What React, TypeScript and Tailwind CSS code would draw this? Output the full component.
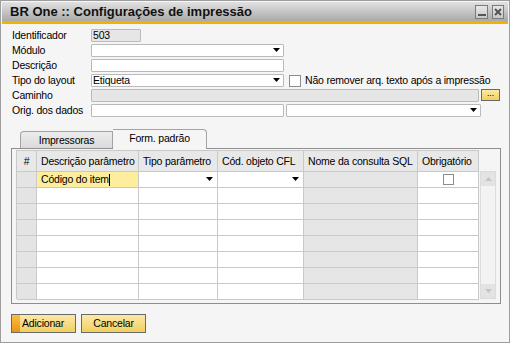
import React from "react";

const Arrow = ({ cls }: { cls: string }) => (
  <svg className={cls} width="7" height="4" viewBox="0 0 7 4">
    <path d="M0 0H7L3.5 4Z" fill="#000" />
  </svg>
);

const Field = ({
  w,
  bg = "bg-white",
  arrow = false,
  children,
}: {
  w: string;
  bg?: string;
  arrow?: boolean;
  children?: React.ReactNode;
}) => (
  <div
    className={`relative h-[13px] border border-[#bababa] rounded-[1px] flex items-center pl-[1px] leading-[11px] ${w} ${bg}`}
  >
    {children}
    {arrow && <Arrow cls="absolute right-[3px] top-[3px]" />}
  </div>
);

const Label = ({ children }: { children: React.ReactNode }) => (
  <div className="w-[80px] pl-[1px] leading-[13px] h-[13px] whitespace-nowrap">{children}</div>
);

const cols = [
  { w: "w-[20px]", label: "#", center: true },
  { w: "w-[102px]", label: "Descrição parâmetro" },
  { w: "w-[79px]", label: "Tipo parâmetro" },
  { w: "w-[86px]", label: "Cód. objeto CFL" },
  { w: "w-[114px]", label: "Nome da consulta SQL" },
  { w: "w-[61px]", label: "Obrigatório" },
];

export default function App() {
  const rows = [0, 1, 2, 3, 4, 5, 6, 7];
  return (
    <div className="w-[510px] h-[343px] border border-[#9d9d9d] bg-[#f5f5f5] p-[1px] flex flex-col font-['Liberation_Sans',Arial,sans-serif] text-[10.5px] tracking-[-0.2px] text-black overflow-hidden">
      {/* Title bar */}
      <div className="h-[19px] bg-gradient-to-b from-[#e2e2e2] to-[#a9a9a9] flex items-center justify-between pl-[8px] pr-[4px]">
        <span className="font-bold text-[13px] tracking-normal leading-[14px] text-[#111] mt-[1px]">
          BR One :: Configurações de impressão
        </span>
        <div className="flex gap-[4px] mt-[1px]">
          <div className="w-[13px] h-[14px] border border-[#7a7a7a] bg-gradient-to-b from-[#e8e8e8] to-[#c8c8c8] flex items-end justify-center pb-[2px]">
            <div className="w-[8px] h-[2px] bg-[#555]" />
          </div>
          <div className="w-[12px] h-[14px] border border-[#7a7a7a] bg-gradient-to-b from-[#e8e8e8] to-[#c8c8c8] flex items-center justify-center">
            <svg width="8" height="8" viewBox="0 0 8 8">
              <path d="M1 1L7 7M7 1L1 7" stroke="#555" strokeWidth="2" />
            </svg>
          </div>
        </div>
      </div>
      <div className="h-[3px] bg-[#f3b200]" />

      {/* Body */}
      <div className="flex-1 flex flex-col pl-[9px] pt-[5px]">
        <div className="flex flex-col gap-[2px]">
          <div className="flex items-center">
            <Label>Identificador</Label>
            <Field w="w-[50px]" bg="bg-[#e6e6e6]">503</Field>
          </div>
          <div className="flex items-center">
            <Label>Módulo</Label>
            <Field w="w-[193px]" arrow />
          </div>
          <div className="flex items-center">
            <Label>Descrição</Label>
            <Field w="w-[193px]" />
          </div>
          <div className="flex items-center">
            <Label>Tipo do layout</Label>
            <Field w="w-[193px]" arrow>Etiqueta</Field>
            <div className="ml-[5px] w-[12px] h-[12px] border border-[#8c8c8c] bg-white" />
            <span className="ml-[4px] leading-[13px] whitespace-nowrap">Não remover arq. texto após a impressão</span>
          </div>
          <div className="flex items-center">
            <Label>Caminho</Label>
            <Field w="w-[388px]" bg="bg-[#e6e6e6]" />
            <div className="ml-[2px] -mt-[2px] w-[19px] h-[12px] border border-[#6a6a6a] bg-gradient-to-b from-[#fbe9a6] to-[#f1cf5c] flex items-center justify-center text-[9px] leading-[9px] pb-[2px]">
              ...
            </div>
          </div>
          <div className="flex items-center">
            <Label>Orig. dos dados</Label>
            <Field w="w-[193px]" />
            <div className="ml-[2px]">
              <Field w="w-[195px]" arrow />
            </div>
          </div>
        </div>

        {/* Tabs */}
        <div className="mt-[12px] flex items-end pl-[9px] h-[19px] relative z-10">
          <div className="w-[93px] h-[17px] border border-[#a3a3a3] border-b-0 rounded-tl-[4px] bg-gradient-to-b from-[#ececec] to-[#dadada] flex items-center justify-center leading-[13px]">
            Impressoras
          </div>
          <div className="w-[94px] h-[20px] -mb-[1px] border border-[#a3a3a3] border-b-0 border-l-0 rounded-tr-[4px] bg-[#f5f5f5] flex items-center justify-center leading-[13px] pb-[2px]">
            Form. padrão
          </div>
        </div>

        {/* Panel */}
        <div className="w-[490px] h-[156px] border border-[#8e8e8e] pl-[4px] pt-[1px] flex">
          <div className="flex flex-col border-l border-t border-[#c9c9c9] bg-white h-[149px]">
            <div className="flex h-[21px]">
              {cols.map((c) => (
                <div
                  key={c.label}
                  className={`${c.w} h-[21px] border-r border-b border-[#c9c9c9] bg-[#e8e8e8] flex items-center leading-[13px] whitespace-nowrap overflow-hidden ${c.center ? "justify-center" : "pl-[4px]"}`}
                >
                  {c.label}
                </div>
              ))}
            </div>
            {rows.map((r) => (
              <div key={r} className="flex h-[16px]">
                <div className="w-[20px] h-[16px] border-r border-b border-[#c9c9c9] bg-[#e4e4e4]" />
                <div
                  className={`w-[102px] h-[16px] border-r border-b border-[#c9c9c9] flex items-center pl-[4px] leading-[13px] ${r === 0 ? "bg-[#fdee9e]" : "bg-white"}`}
                >
                  {r === 0 && (
                    <>
                      <span>Código do item</span>
                      <span className="w-[1px] h-[12px] bg-black" />
                    </>
                  )}
                </div>
                <div className="relative w-[79px] h-[16px] border-r border-b border-[#c9c9c9] bg-white">
                  {r === 0 && <Arrow cls="absolute right-[4px] top-[5px]" />}
                </div>
                <div className="relative w-[86px] h-[16px] border-r border-b border-[#c9c9c9] bg-white">
                  {r === 0 && <Arrow cls="absolute right-[4px] top-[5px]" />}
                </div>
                <div className="w-[114px] h-[16px] border-r border-b border-[#c9c9c9] bg-[#e6e6e6]" />
                <div className="w-[61px] h-[16px] border-r border-b border-[#c9c9c9] bg-white flex justify-center items-center">
                  {r === 0 && <div className="w-[11px] h-[11px] border border-[#8c8c8c] bg-white" />}
                </div>
              </div>
            ))}
          </div>
          {/* Scrollbar */}
          <div className="ml-[1px] mt-[21px] w-[16px] h-[128px] border border-[#dcdcdc] bg-[#f3f3f3] flex flex-col justify-between">
            <div className="w-[14px] h-[14px] bg-[#e3e3e3] flex items-center justify-center">
              <svg width="7" height="4" viewBox="0 0 7 4">
                <path d="M0 4H7L3.5 0Z" fill="#c4c4c4" />
              </svg>
            </div>
            <div className="w-[14px] h-[14px] bg-[#e3e3e3] flex items-center justify-center">
              <svg width="7" height="4" viewBox="0 0 7 4">
                <path d="M0 0H7L3.5 4Z" fill="#c4c4c4" />
              </svg>
            </div>
          </div>
        </div>

        {/* Buttons */}
        <div className="mt-[10px] flex gap-[5px]">
          <div className="relative w-[65px] h-[19px] border border-[#6a6a6a] bg-gradient-to-b from-[#fbe9a6] to-[#f1cf5c] flex items-center pl-[10px] leading-[13px] overflow-hidden">
            <div className="absolute left-0 top-0 bottom-0 w-[8px] bg-gradient-to-b from-[#f8c040] to-[#ec9410]" />
            <span className="relative">Adicionar</span>
          </div>
          <div className="w-[65px] h-[19px] border border-[#6a6a6a] bg-gradient-to-b from-[#fbe9a6] to-[#f1cf5c] flex items-center justify-center leading-[13px]">
            Cancelar
          </div>
        </div>
      </div>
    </div>
  );
}
